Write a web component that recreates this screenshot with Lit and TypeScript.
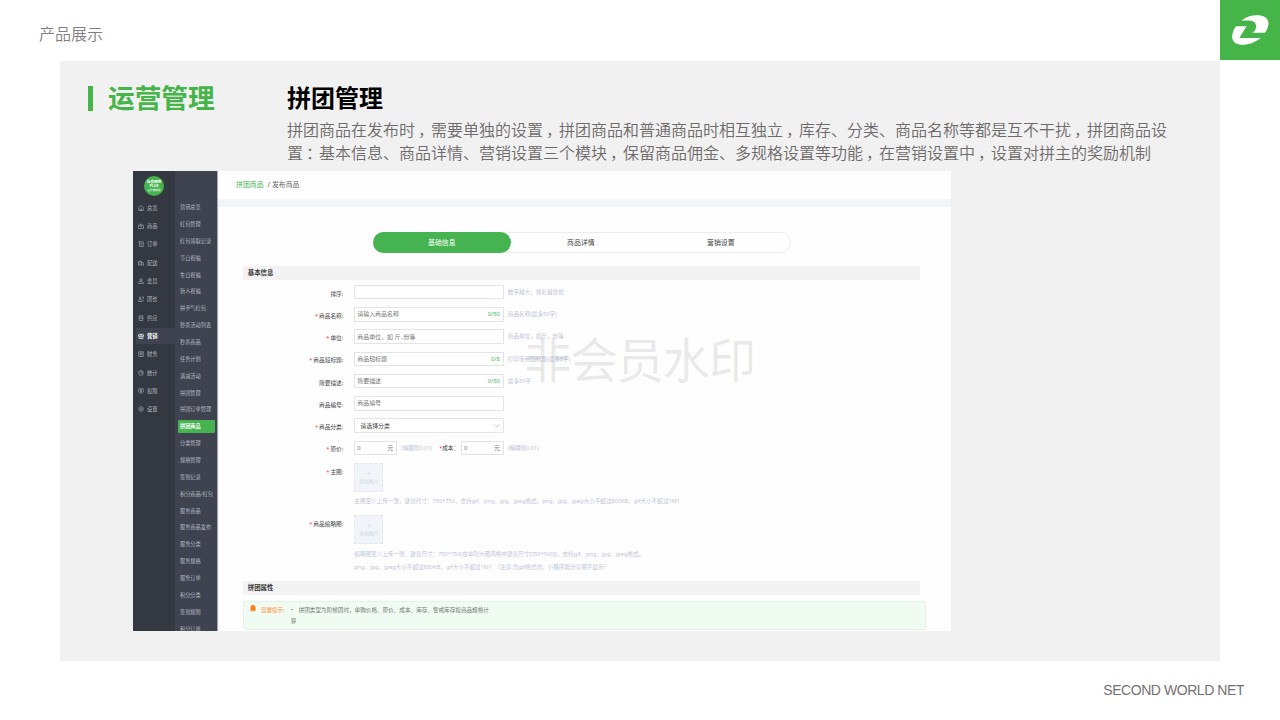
import { LitElement, html, css, svg } from "lit";
import { customElement } from "lit/decorators.js";

const NAV: [string, unknown][] = [
  ["总览", svg`<path d="M1.5 5 6 1l4.5 4v6h-9zM5 11V8h2v3"/>`],
  ["商品", svg`<path d="M1 4.5h10V11H1zM3.5 4.500 6 1.500l2.500 3M4 7.500h4"/>`],
  ["订单", svg`<path d="M1 1.500h9.500M3 1.500v9.500h7.500V1.500M5 4.500h3.500M5 7.500h3.500"/>`],
  ["配送", svg`<path d="M1 3h6v7H1zM7 5h3l1.500 2.500V10H7M3 5.500h2M3 8h2M4 1v2"/>`],
  ["会员", svg`<circle cx="6" cy="3.500" r="2.200"/><path d="M1 11c0-3 2-4.500 5-4.500s5 1.500 5 4.500z"/>`],
  ["团长", svg`<circle cx="4.500" cy="4" r="2"/><path d="M1 11c0-3 1.500-4 3.500-4S8 8 8 11zM8 2h3v3.500M9 7.500l2 3.500"/>`],
  ["供应", svg`<path d="M2.500 1.500h7v9.500h-7zM1 6h10M5 3.800h2"/>`],
  ["营销", svg`<path d="M1 3.500h10v3H1zM2 6.500V11h8V6.500M6 3.500V11M3.500 1 6 3.500 8.500 1"/>`],
  ["财务", svg`<path d="M1.500 1.500h9v9.500h-9zM3.500 4h5M3.500 6.500h5M6 4v5"/>`],
  ["统计", svg`<circle cx="6" cy="6" r="4.800"/><path d="M6 1.500V6h4"/>`],
  ["权限", svg`<path d="M1.500 1.500h9V8L6 11 1.500 8zM4 4h4M4 6.500h4M6 4v5"/>`],
  ["设置", svg`<path d="M6 1l4.300 2.500v5L6 11 1.700 8.500v-5z"/><circle cx="6" cy="6" r="1.600"/>`],
];

const SUB = ["营销总览", "红包管理", "红包领取记录", "节日祝福", "生日祝福", "新人祝福", "拼手气红包", "秒杀活动列表",
  "秒杀商品", "任务计划", "满减活动", "拼团管理", "拼团订单管理", "拼团商品", "分类管理", "规格管理", "签到记录",
  "积分商品/红包", "服务商品", "服务商品发布", "服务分类", "服务规格", "服务订单", "积分分类", "签到规则", "积分订单"];

interface Field { label: string; req?: boolean; text?: string; count?: string; hint?: string; }
const FIELDS: Field[] = [
  { label: "排序", hint: "数字越大，排名越靠前" },
  { label: "商品名称", req: true, text: "请输入商品名称", count: "0/50", hint: "商品名称(最多50字)" },
  { label: "单位", req: true, text: "商品单位，如 斤..份等", hint: "商品单位，如斤，份等" },
  { label: "商品短标题", req: true, text: "商品短标题", count: "0/8", hint: "打印专用短标题(最多8字)" },
  { label: "简要描述", text: "简要描述", count: "0/50", hint: "最多50字" },
  { label: "商品编号", text: "商品编号" },
];

@customElement("admin-screen")
class AdminScreen extends LitElement {
  static styles = css`
    :host { display: flex; width: 818px; height: 460px; overflow: hidden; background: #fefefe; position: relative;
      font-family: "Noto Sans", "Noto Sans CJK SC", sans-serif; color: #555; font-size: 5.6px; line-height: 8px; white-space: nowrap; }
    * { box-sizing: border-box; }
    .nav { width: 42px; background: #343840; color: #b4b9c2; font-size: 5.3px; flex: none; }
    .brand { width: 20px; height: 20px; margin: 5px 0 2.500px 11px; border-radius: 50%; background: #45b450; color: #fff;
      display: flex; flex-direction: column; align-items: center; justify-content: center; font-size: 3.600px; line-height: 4.200px; font-weight: 700; }
    .brand .tiny { font-size: 2.600px; font-weight: 400; }
    .item { height: 18.350px; display: flex; align-items: center; padding-left: 4.500px; gap: 3.500px; }
    .item svg { width: 6px; height: 6px; fill: none; stroke: #a4a9b3; stroke-width: 1.300; }
    .item.on { background: #3e434f; color: #fff; height: 16px; margin: 1.200px 0 1.150px 2.500px; padding-left: 2px; font-weight: 700; }
    .item.on svg { stroke: #fff; }
    .sub { width: 42px; background: #3e434f; color: #b9bdc7; font-size: 5.200px; padding: 27.700px 0 0 2.800px; flex: none; overflow: hidden; }
    .entry { height: 16.860px; display: flex; align-items: center; padding-left: 2.200px; }
    .entry.on { background: #45b450; color: #fff; font-weight: 700; border-radius: 1px; width: 37px; height: 12.500px; margin: 2.180px 0; }
    .main { flex: 1; min-width: 0; border-left: .5px solid #a5a9b1; }
    .crumbs { height: 28px; padding-left: 18px; display: flex; align-items: center; gap: 4px; font-size: 6.900px; color: #666; }
    .crumbs .here { color: #45b450; }
    .band { height: 8px; background: #f1f5f9; }
    .sheet { border-left: 1px solid #f1f5f9; height: 424px; padding: 24.500px 0 0 24.300px; }
    .tabs { width: 418.500px; height: 21.500px; margin: 0 0 .5px 129.500px; border: 1px solid #ececec; border-radius: 11px; display: grid; grid-template-columns: 137px 140px 140px;
      font-size: 6.900px; line-height: 19.500px; text-align: center; color: #444; }
    .tabs .on { background: #45b450; color: #fff; border-radius: 11px; margin: -1px 0 -1px -1px; line-height: 21.500px; }
    .title { width: 677px; height: 13.500px; background: #f3f3f3; padding-left: 4.500px; font-size: 6.400px; line-height: 13.500px; font-weight: 700; color: #333; }
    .first { margin: 13px 0 5.300px; }
    .row { display: flex; height: 22.250px; align-items: flex-start; }
    .row.photo { height: 52.700px; }
    .row.photos { height: 65.800px; }
    .label { width: 100px; margin-right: 11px; text-align: right; padding-top: 4.900px; flex: none; color: #444; font-size: 5.700px; }
    .label b, .cost b { color: #f33; font-weight: 400; margin-right: 1px; }
    .input { width: 149.500px; height: 14.500px; border: 1px solid #e4e4e6; display: flex; justify-content: space-between; align-items: center;
      padding: 0 3px 0 2px; background: #fff; font-size: 5.950px; color: #777; flex: none; }
    .input.short { width: 43px; }
    .input svg { width: 6px; height: 4px; fill: none; stroke: #bbb; stroke-width: .7; }
    .input.select { color: #444; padding-left: 5px; border-radius: 1px; }
    .count { color: #45b450; font-size: 5.800px; }
    .hint { color: #bcc5d8; margin-left: 4px; padding-top: 3px; }
    .short + .hint { letter-spacing: -.1px; }
    .cost { padding-top: 3px; margin: 0 2px 0 7.500px; color: #444; }
    .cost b { margin: 0; }
    .upload { width: 29px; height: 29px; border: 1px dashed #e3e8ed; background: #f1f5f9; color: #d2d8de; font-size: 4.900px; line-height: 7px; text-align: center; padding-top: 5px; }
    .upload .plus { font-size: 9px; line-height: 9px; font-weight: 300; }
    .note { color: #bcc5d8; font-size: 5.600px; margin-top: 5.500px; }
    .note + .note { margin-top: 5px; }
    .alert { width: 683px; height: 29px; margin-top: 6.200px; background: #f0fcf2; border: 1px solid #e0f5e3; border-radius: 2px; display: flex; padding: 3.500px 0 0 6px; color: #777; line-height: 10.500px; font-size: 5.600px; }
    .alert svg { width: 6px; height: 7px; fill: #ff7d18; margin-right: 4.500px; flex: none; }
    .alert .warm { color: #ff8b3a; margin-right: 6px; }
    .alert .dot { display: inline-block; width: 8px; }
    .mark { position: absolute; left: 391px; top: 156px; font-size: 47.500px; line-height: 62px; letter-spacing: -1.300px; color: rgba(90, 90, 90, .12); font-family: "Noto Sans CJK SC", sans-serif; font-weight: 400; }
  `;

  label(text: string, req = false) {
    return html`<div class="label">${req ? html`<b>*</b>` : ""}${text}:</div>`;
  }

  render() {
    return html`
      <div class="nav">
        <div class="brand"><span>社交团购</span><span>PLUS</span><span class="tiny">官方旗舰版</span></div>
        ${NAV.map(([t, i]) => html`<div class="item ${t === "营销" ? "on" : ""}"><svg viewBox="0 0 12 12">${i}</svg><span>${t}</span></div>`)}
      </div>
      <div class="sub">${SUB.map((t) => html`<div class="entry ${t === "拼团商品" ? "on" : ""}">${t}</div>`)}</div>
      <div class="main">
        <div class="crumbs"><span class="here">拼团商品</span><span>/ 发布商品</span></div>
        <div class="band"></div>
        <div class="sheet">
          <div class="tabs"><div class="on">基础信息</div><div>商品详情</div><div>营销设置</div></div>
          <div class="title first">基本信息</div>
          ${FIELDS.map((f) => html`<div class="row">${this.label(f.label, f.req)}
            <div class="input"><span>${f.text ?? ""}</span><span class="count">${f.count ?? ""}</span></div>
            <div class="hint">${f.hint ?? ""}</div></div>`)}
          <div class="row">${this.label("商品分类", true)}
            <div class="input select"><span>请选择分类</span><svg viewBox="0 0 6 4"><path d="M.5.5 3 3 5.500.5"/></svg></div></div>
          <div class="row">${this.label("原价", true)}
            <div class="input short"><span>0</span><span>元</span></div><div class="hint">(精确到0.01)</div>
            <div class="cost"><b>*</b>成本：</div>
            <div class="input short"><span>0</span><span>元</span></div><div class="hint">(精确到0.01)</div></div>
          <div class="row photo">${this.label("主图", true)}
            <div><div class="upload"><div class="plus">+</div>添加图片</div>
              <div class="note">主图至少上传一张，建议尺寸：750*750，支持gif、png、jpg、jpeg格式。png、jpg、jpeg大小不超过800KB，gif大小不超过1M！</div></div></div>
          <div class="row photos">${this.label("商品缩略图", true)}
            <div><div class="upload"><div class="plus">+</div>添加图片</div>
              <div class="note">缩略图至少上传一张，建议尺寸：750*750(在单列大图风格中建议尺寸[750*560])，支持gif、png、jpg、jpeg格式。</div>
              <div class="note">png、jpg、jpeg大小不超过800KB，gif大小不超过1M！（注意:为gif格式时，小程序端分享图不显示）</div></div></div>
          <div class="title">拼团属性</div>
          <div class="alert"><svg viewBox="0 0 12 14"><path d="M6 0c3 0 5 2 5 5v5l1 1.500H0L1 10V5c0-3 2-5 5-5zM4 12.500h4L6 14z"/></svg>
            <span class="warm">温馨提示:</span><div><span class="dot">•</span>拼团类型为阶梯团时，单购价格、原价、成本、库存、警戒库存按商品规格计<br>算</div></div>
        </div>
      </div>
      <div class="mark">非会员水印</div>`;
  }
}

@customElement("app-root")
class AppRoot extends LitElement {
  static styles = css`
    :host { display: flex; flex-direction: column; width: 1280px; height: 720px; background: #fff; overflow: hidden; font-family: "Liberation Sans", "Noto Sans CJK SC", sans-serif; }
    * { box-sizing: border-box; }
    .top { display: flex; justify-content: space-between; height: 61px; flex: none; }
    .name { padding: 21px 0 0 39px; font-size: 16px; line-height: 24px; color: #7f7f7f; font-family: "Noto Sans CJK SC", sans-serif; font-weight: 350; }
    .logo { width: 60px; height: 60px; background: #45b449; }
    .card { margin: 0 60px; height: 600px; background: #f1f1f1; font-family: "Noto Sans CJK SC", sans-serif; flex: none; }
    .head { display: flex; height: 110px; }
    .section { width: 199px; margin-left: 28px; padding-top: 25px; display: flex; gap: 15px; align-items: flex-start; }
    .bar { width: 5px; height: 25px; background: #45b449; }
    .section h1 { margin: -9px 0 0; font-size: 26.700px; line-height: 40px; color: #45b449; font-weight: 700; }
    h2 { margin: 18px 0 0; font-size: 24px; line-height: 36px; color: #000; font-weight: 700; }
    p { margin: 3px 0 0; font-size: 16px; line-height: 23px; color: #6e6a6a; font-weight: 350; white-space: nowrap; }
    .mid { display: inline-block; width: 16px; padding-left: 3px; font-feature-settings: "halt"; }
    admin-screen { margin-left: 73px; }
    .foot { text-align: right; padding: 21px 36px 0 0; font-size: 14px; letter-spacing: -.44px; line-height: 17px; color: #767171; }
  `;

  prose(text: string) {
    return text.split(/([，：])/).map((s) => (s === "，" || s === "：" ? html`<span class="mid">${s}</span>` : s));
  }

  render() {
    return html`
      <div class="top"><div class="name">产品展示</div>
        <svg class="logo" viewBox="0 0 60 60" fill="#fff"><path d="M21.500 20.500C26 16.500 33 14.700 39 15.300c7.500.7 10.500 5.200 9.300 10-.6 2.800-1.700 5.200-3.300 7.500H32.500c3-2.300 4.300-5 3.300-8.300-.8-3-3.500-4-7.300-4zM16 26.300h10.500L19.300 38H40.700C35 42.500 27 45.500 20.500 44.700 14 44 11.700 40 12.200 35.500c.4-3.500 1.800-6.600 3.800-9.200z"/></svg>
      </div>
      <div class="card">
        <div class="head">
          <div class="section"><div class="bar"></div><h1>运营管理</h1></div>
          <div><h2>拼团管理</h2>
            <p>${this.prose("拼团商品在发布时，需要单独的设置，拼团商品和普通商品时相互独立，库存、分类、商品名称等都是互不干扰，拼团商品设")}<br>${this.prose("置：基本信息、商品详情、营销设置三个模块，保留商品佣金、多规格设置等功能，在营销设置中，设置对拼主的奖励机制")}</p></div>
        </div>
        <admin-screen></admin-screen>
      </div>
      <div class="foot">SECOND WORLD NET</div>`;
  }
}
